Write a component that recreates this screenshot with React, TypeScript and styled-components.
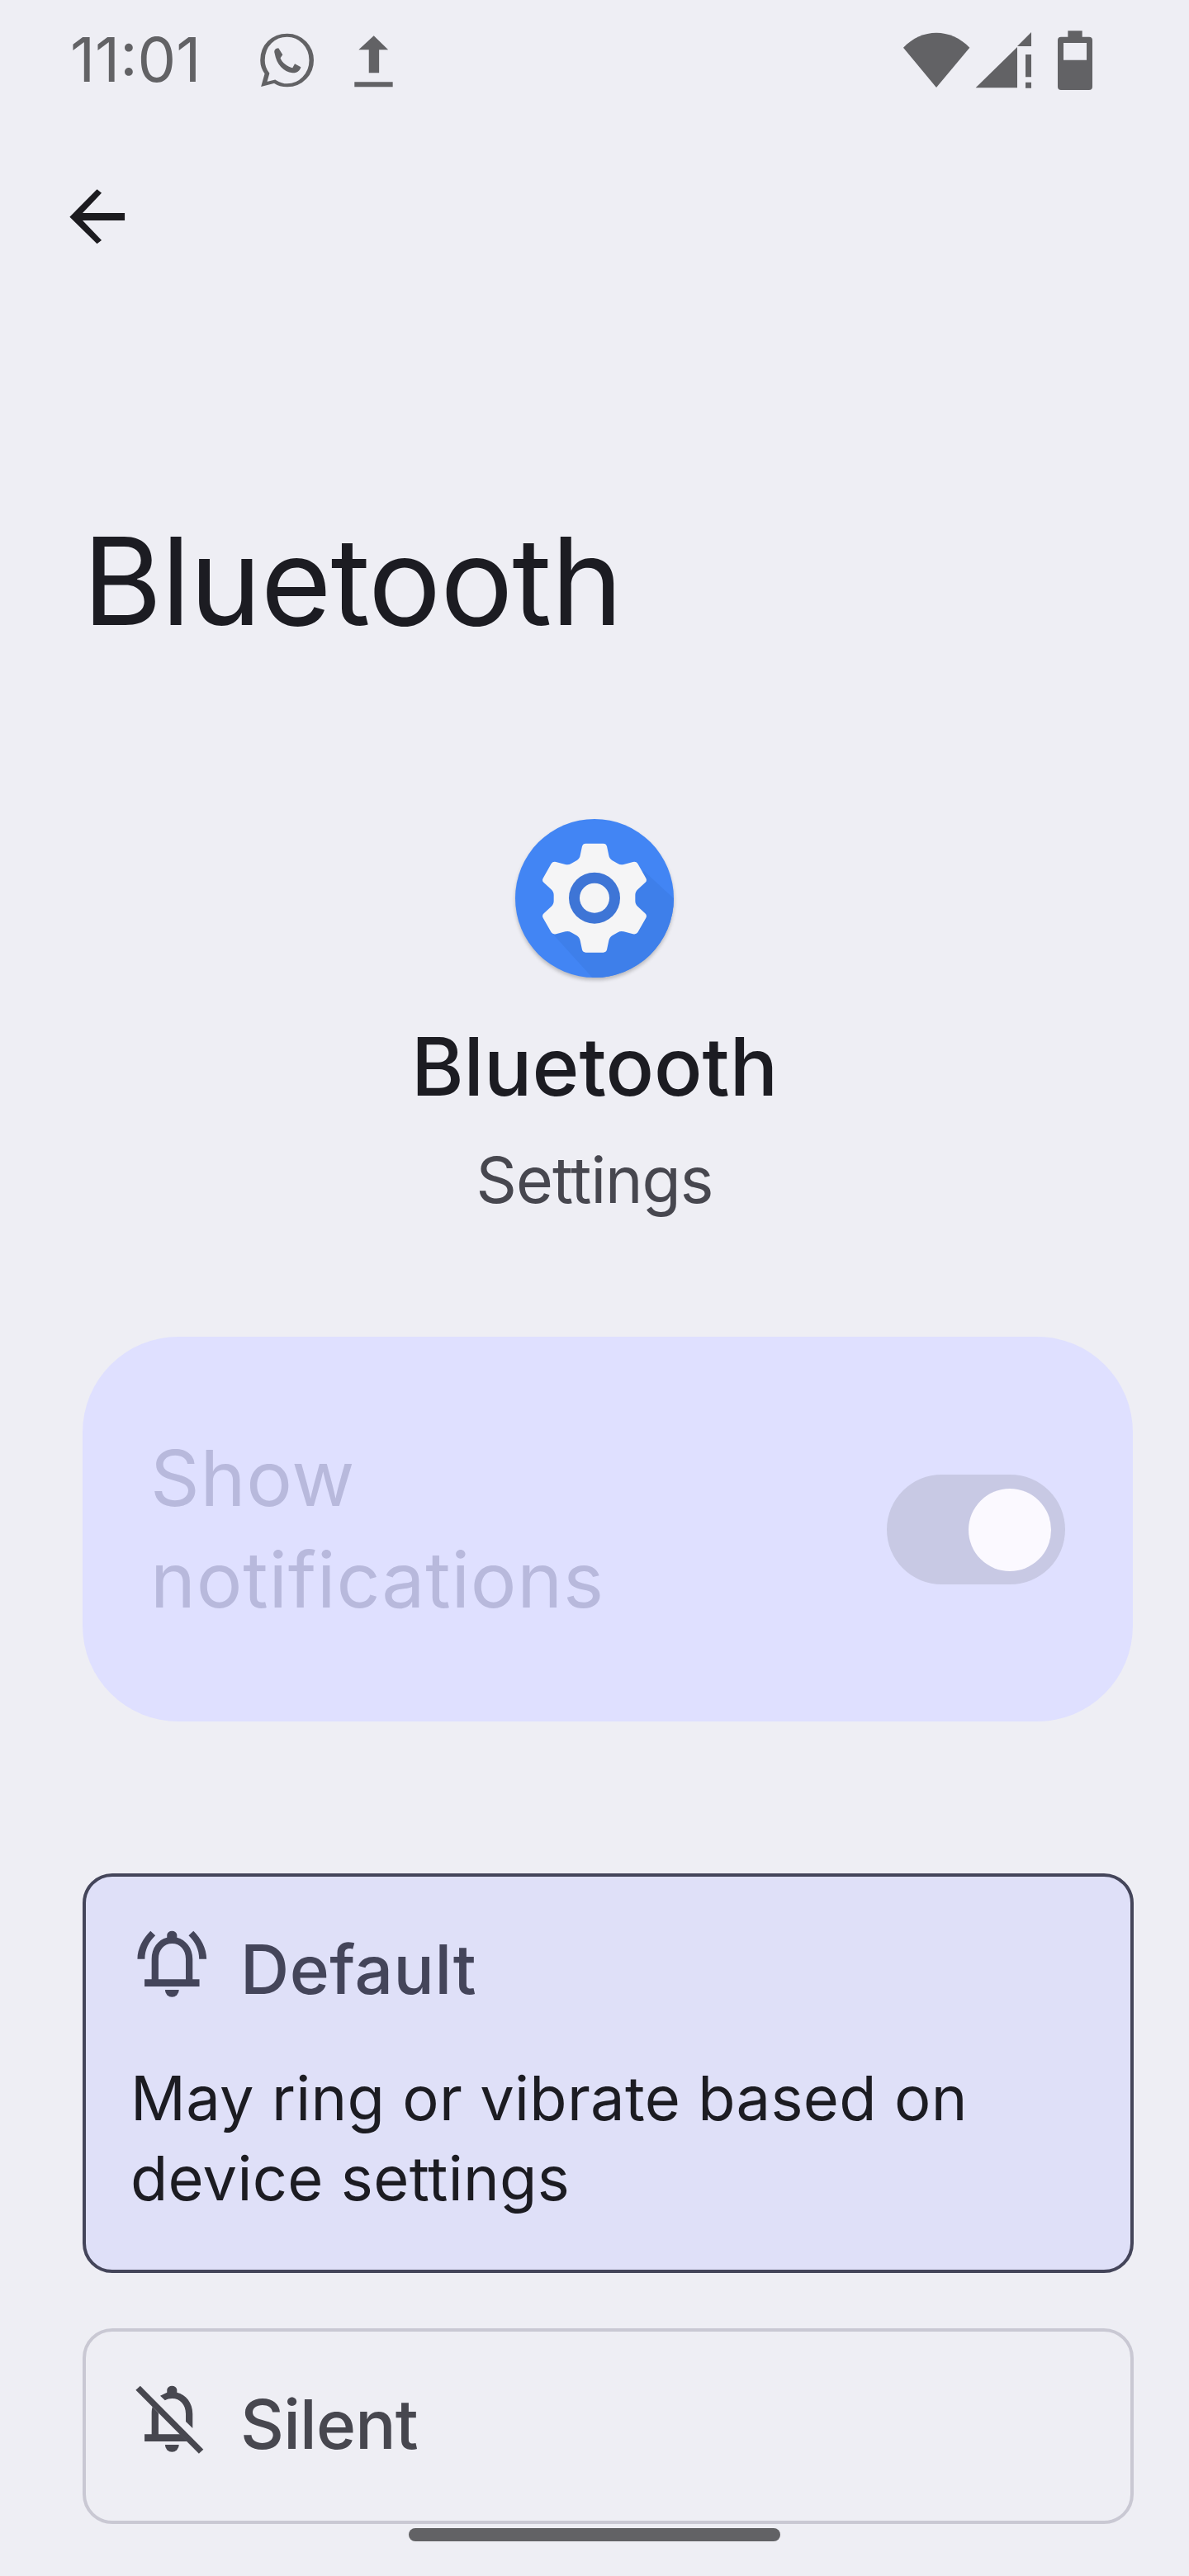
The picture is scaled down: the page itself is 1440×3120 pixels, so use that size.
import React from "react";
import styled, { createGlobalStyle } from "styled-components";

const Global = createGlobalStyle`
  html, body { margin: 0; padding: 0; background: #eeeef4; }
  * { box-sizing: border-box; }
`;

const Screen = styled.div`
  width: 1440px;
  height: 3120px;
  background: #eeeef4;
  font-family: "Inter", "Liberation Sans", sans-serif;
  overflow: hidden;
`;

const StatusBar = styled.div`
  height: 112px;
  padding: 32px 116px 0 85px;
  display: flex;
  align-items: flex-start;
  color: #626265;
`;

const Clock = styled.div`
  width: 227px;
  font-size: 74px;
  line-height: 80px;
  letter-spacing: 0;
  color: #626265;
  white-space: nowrap;
`;

const Glyph = styled.svg<{ $gap?: number; $top?: number; $ink?: string }>`
  display: block;
  flex: none;
  fill: ${(p) => p.$ink ?? "#626265"};
  margin-left: ${(p) => p.$gap ?? 0}px;
  margin-top: ${(p) => p.$top ?? 0}px;
`;

const Toolbar = styled.div`
  height: 507px;
  padding: 115px 0 0 83px;
`;

const LargeTitle = styled.h1`
  margin: 0;
  height: 373px;
  padding: 0 0 0 100px;
  font-size: 147px;
  line-height: 170px;
  font-weight: 400;
  letter-spacing: -1px;
  color: #1c1c22;
`;

const AppHeader = styled.div`
  display: flex;
  flex-direction: column;
  align-items: center;
  width: 1440px;
`;

const AppIconFrame = styled.svg`
  display: block;
  filter: drop-shadow(0 3px 2px rgba(0, 0, 0, 0.22));
`;

const AppName = styled.div`
  margin-top: 53px;
  font-size: 97px;
  line-height: 110px;
  font-weight: 500;
  letter-spacing: 0;
  color: #1c1c22;
`;

const AppKind = styled.div`
  margin-top: 40px;
  font-size: 77px;
  line-height: 84px;
  letter-spacing: -1px;
  color: #47474f;
`;

const MainSwitchCard = styled.div`
  margin: 148px 68px 0 100px;
  height: 466px;
  border-radius: 116px;
  background: #dfe0ff;
  padding: 0 82px;
  display: flex;
  align-items: center;
  justify-content: space-between;
`;

const SwitchLabel = styled.div`
  font-size: 93px;
  line-height: 123px;
  letter-spacing: 0.8px;
  color: #b8b9dc;
`;

const SwitchTrack = styled.div`
  position: relative;
  width: 216px;
  height: 133px;
  border-radius: 67px;
  background: #c8c9e4;
`;

const SwitchThumb = styled.div`
  position: absolute;
  top: 17px;
  right: 17px;
  width: 100px;
  height: 100px;
  border-radius: 50%;
  background: #fbf9ff;
`;

const OptionCard = styled.div<{ $selected?: boolean }>`
  margin: ${(p) => (p.$selected ? "184px" : "67px")} 67px 0 100px;
  height: ${(p) => (p.$selected ? "484px" : "237px")};
  border-radius: 36px;
  border: 4px solid ${(p) => (p.$selected ? "#44455a" : "#c9c8d3")};
  background: ${(p) => (p.$selected ? "#dfe0f8" : "transparent")};
  padding: 62px 54px 0;
`;

const OptionHead = styled.div`
  display: flex;
  align-items: flex-start;
  gap: 35px;
  padding-left: 5px;
`;

const OptionTitle = styled.div<{ $selected?: boolean }>`
  margin-top: 6px;
  font-size: 82px;
  line-height: 90px;
  font-weight: 500;
  letter-spacing: ${(p) => (p.$selected ? "0.5px" : "-0.8px")};
  color: ${(p) => (p.$selected ? "#44455a" : "#47474f")};
`;

const OptionBody = styled.div`
  margin-top: 62px;
  font-size: 74px;
  line-height: 97px;
  letter-spacing: 0.3px;
  color: #1c1c22;
`;

const HomeBar = styled.div`
  width: 450px;
  height: 16px;
  border-radius: 8px;
  background: #626265;
  margin: 5px 0 0 495px;
`;

function BackArrow() {
  return (
    <Glyph $ink="#1c1b1f" width={69} height={70} viewBox="180 680 150 210" preserveAspectRatio="none">
      <path d="M183 787 L255 687 L267 700 L217 773 H328 V800 H217 L267 872 L255 885 Z" />
    </Glyph>
  );
}

function WhatsApp() {
  return (
    <Glyph $top={6} width={73.5} height={70} viewBox="680 115 160 210" preserveAspectRatio="none">
      <path
        d="M705 268 C695 250 693 235 693 220 C693 165 722 129 758 129 C794 129 822 170 822 220 C822 270 794 311 758 311 C745 311 735 306 725 297 L697 307 Z"
        fill="none"
        stroke="#626265"
        strokeWidth={12}
      />
      <path d="M725 195 C722 185 727 176 735 176 L746 200 L740 212 C745 230 758 243 772 248 L778 233 L794 245 C792 258 784 267 772 266 C748 262 730 235 725 195Z" />
    </Glyph>
  );
}

function Upload() {
  return (
    <Glyph $gap={41.5} $top={10} width={50.5} height={65} viewBox="930 125 110 195" preserveAspectRatio="none">
      <path d="M986 129 L1024 180 H1000 V264 H973 V180 H946 Z M935 297 H1036 V315 H935 Z" />
    </Glyph>
  );
}

function Wifi() {
  return (
    <Glyph $top={5} width={82} height={70} viewBox="340 110 246 210">
      <path d="M343 172 C410 100 516 100 584 172 L463 317 Z" />
    </Glyph>
  );
}

function Signal() {
  return (
    <Glyph $gap={6} $top={5} width={70} height={70} viewBox="604 110 210 210">
      <path d="M606 318 L757 170 V318 Z M757 167 L808 116 V167 Z M787 197 H808 V279 H787 Z M787 298 H808 V319 H787 Z" />
    </Glyph>
  );
}

function Battery() {
  return (
    <Glyph $gap={28.7} $top={5} width={44} height={72} viewBox="900 110 132 216">
      <path
        fillRule="evenodd"
        d="M940 111 H992 V133 H1017 A12 12 0 0 1 1029 145 V314 A12 12 0 0 1 1017 326 H915 A12 12 0 0 1 903 314 V145 A12 12 0 0 1 915 133 H940 Z M924 155 V217 H1008 V155 Z"
      />
    </Glyph>
  );
}

function SettingsIcon() {
  return (
    <AppIconFrame width={192} height={192} viewBox="192 96 576 576">
      <circle cx={480} cy={384} r={288} fill="#4285f4" />
      <path d="M660 285 L768 385 A288 288 0 0 1 472 672 L330 515 Z" fill="#3e7fea" />
      <path
        fill="#f5f5f6"
        d="M448 185 H512 Q522 185 525 195 L532 228 Q534 240 545 247 L565 258 Q574 264 586 261 L620 252 Q632 250 637 258 L667 311 Q672 320 664 327 L638 351 Q628 360 628 372 V394 Q628 406 638 415 L664 439 Q672 446 667 455 L637 508 Q632 516 620 514 L586 505 Q574 502 565 508 L545 519 Q534 526 532 538 L525 571 Q522 581 512 581 H448 Q438 581 435 571 L428 538 Q426 526 415 519 L395 508 Q386 502 374 505 L340 514 Q328 516 323 508 L293 455 Q288 446 296 439 L322 415 Q332 406 332 394 V372 Q332 360 322 351 L296 327 Q288 320 293 311 L323 258 Q328 250 340 252 L374 261 Q386 264 395 258 L415 247 Q426 240 428 228 L435 195 Q438 185 448 185 Z"
      />
      <circle cx={480} cy={383} r={93} fill="#3e75d6" />
      <circle cx={480} cy={383} r={54} fill="#f5f5f6" />
    </AppIconFrame>
  );
}

function BellActive() {
  return (
    <Glyph $ink="#44455a" width={93} height={90} viewBox="240 285 270 270" preserveAspectRatio="none">
      <path
        fillRule="evenodd"
        d="M300 472 V398 C300 358 322 328 354 320 V310 A18 18 0 0 1 389 310 V320 C420 328 444 358 444 398 V472 H468 V498 H275 V472 Z M324 472 H420 V398 C420 365 400 342 372 342 C344 342 324 365 324 398 Z"
      />
      <path d="M347 510 H396 A24.5 26 0 0 1 347 510 Z" />
      <path d="M250 398 C250 360 270 322 296 296 L313 313 C290 336 276 364 276 398 Z" />
      <path d="M493 398 C493 360 473 322 447 296 L430 313 C453 336 467 364 467 398 Z" />
    </Glyph>
  );
}

function BellOff() {
  return (
    <Glyph $ink="#47474f" width={93} height={90} viewBox="240 258 270 270" preserveAspectRatio="none">
      <path d="M330 305 L354 293 V283 A18 18 0 0 1 389 283 V293 C420 300 444 330 444 371 V423 L420 399 V371 C420 338 400 315 372 315 C362 315 355 317 347 322 Z" />
      <path d="M275 445 H300 V371 C300 360 301 352 303 345 L324 368 V445 H400 L425 471 H275 Z" />
      <path d="M347 483 H396 A24.5 26 0 0 1 347 483 Z" />
      <path d="M252 277 L474 508" fill="none" stroke="#47474f" strokeWidth={22} />
    </Glyph>
  );
}

const Spacer = styled.div`
  flex: 1;
`;

export default function App() {
  return (
    <Screen>
      <Global />
      <StatusBar>
        <Clock>11:01</Clock>
        <WhatsApp />
        <Upload />
        <Spacer />
        <Wifi />
        <Signal />
        <Battery />
      </StatusBar>
      <Toolbar>
        <BackArrow />
      </Toolbar>
      <LargeTitle>Bluetooth</LargeTitle>
      <AppHeader>
        <SettingsIcon />
        <AppName>Bluetooth</AppName>
        <AppKind>Settings</AppKind>
      </AppHeader>
      <MainSwitchCard>
        <SwitchLabel>
          Show
          <br />
          notifications
        </SwitchLabel>
        <SwitchTrack>
          <SwitchThumb />
        </SwitchTrack>
      </MainSwitchCard>
      <OptionCard $selected>
        <OptionHead>
          <BellActive />
          <OptionTitle $selected>Default</OptionTitle>
        </OptionHead>
        <OptionBody>
          May ring or vibrate based on
          <br />
          device settings
        </OptionBody>
      </OptionCard>
      <OptionCard>
        <OptionHead>
          <BellOff />
          <OptionTitle>Silent</OptionTitle>
        </OptionHead>
      </OptionCard>
      <HomeBar />
    </Screen>
  );
}
